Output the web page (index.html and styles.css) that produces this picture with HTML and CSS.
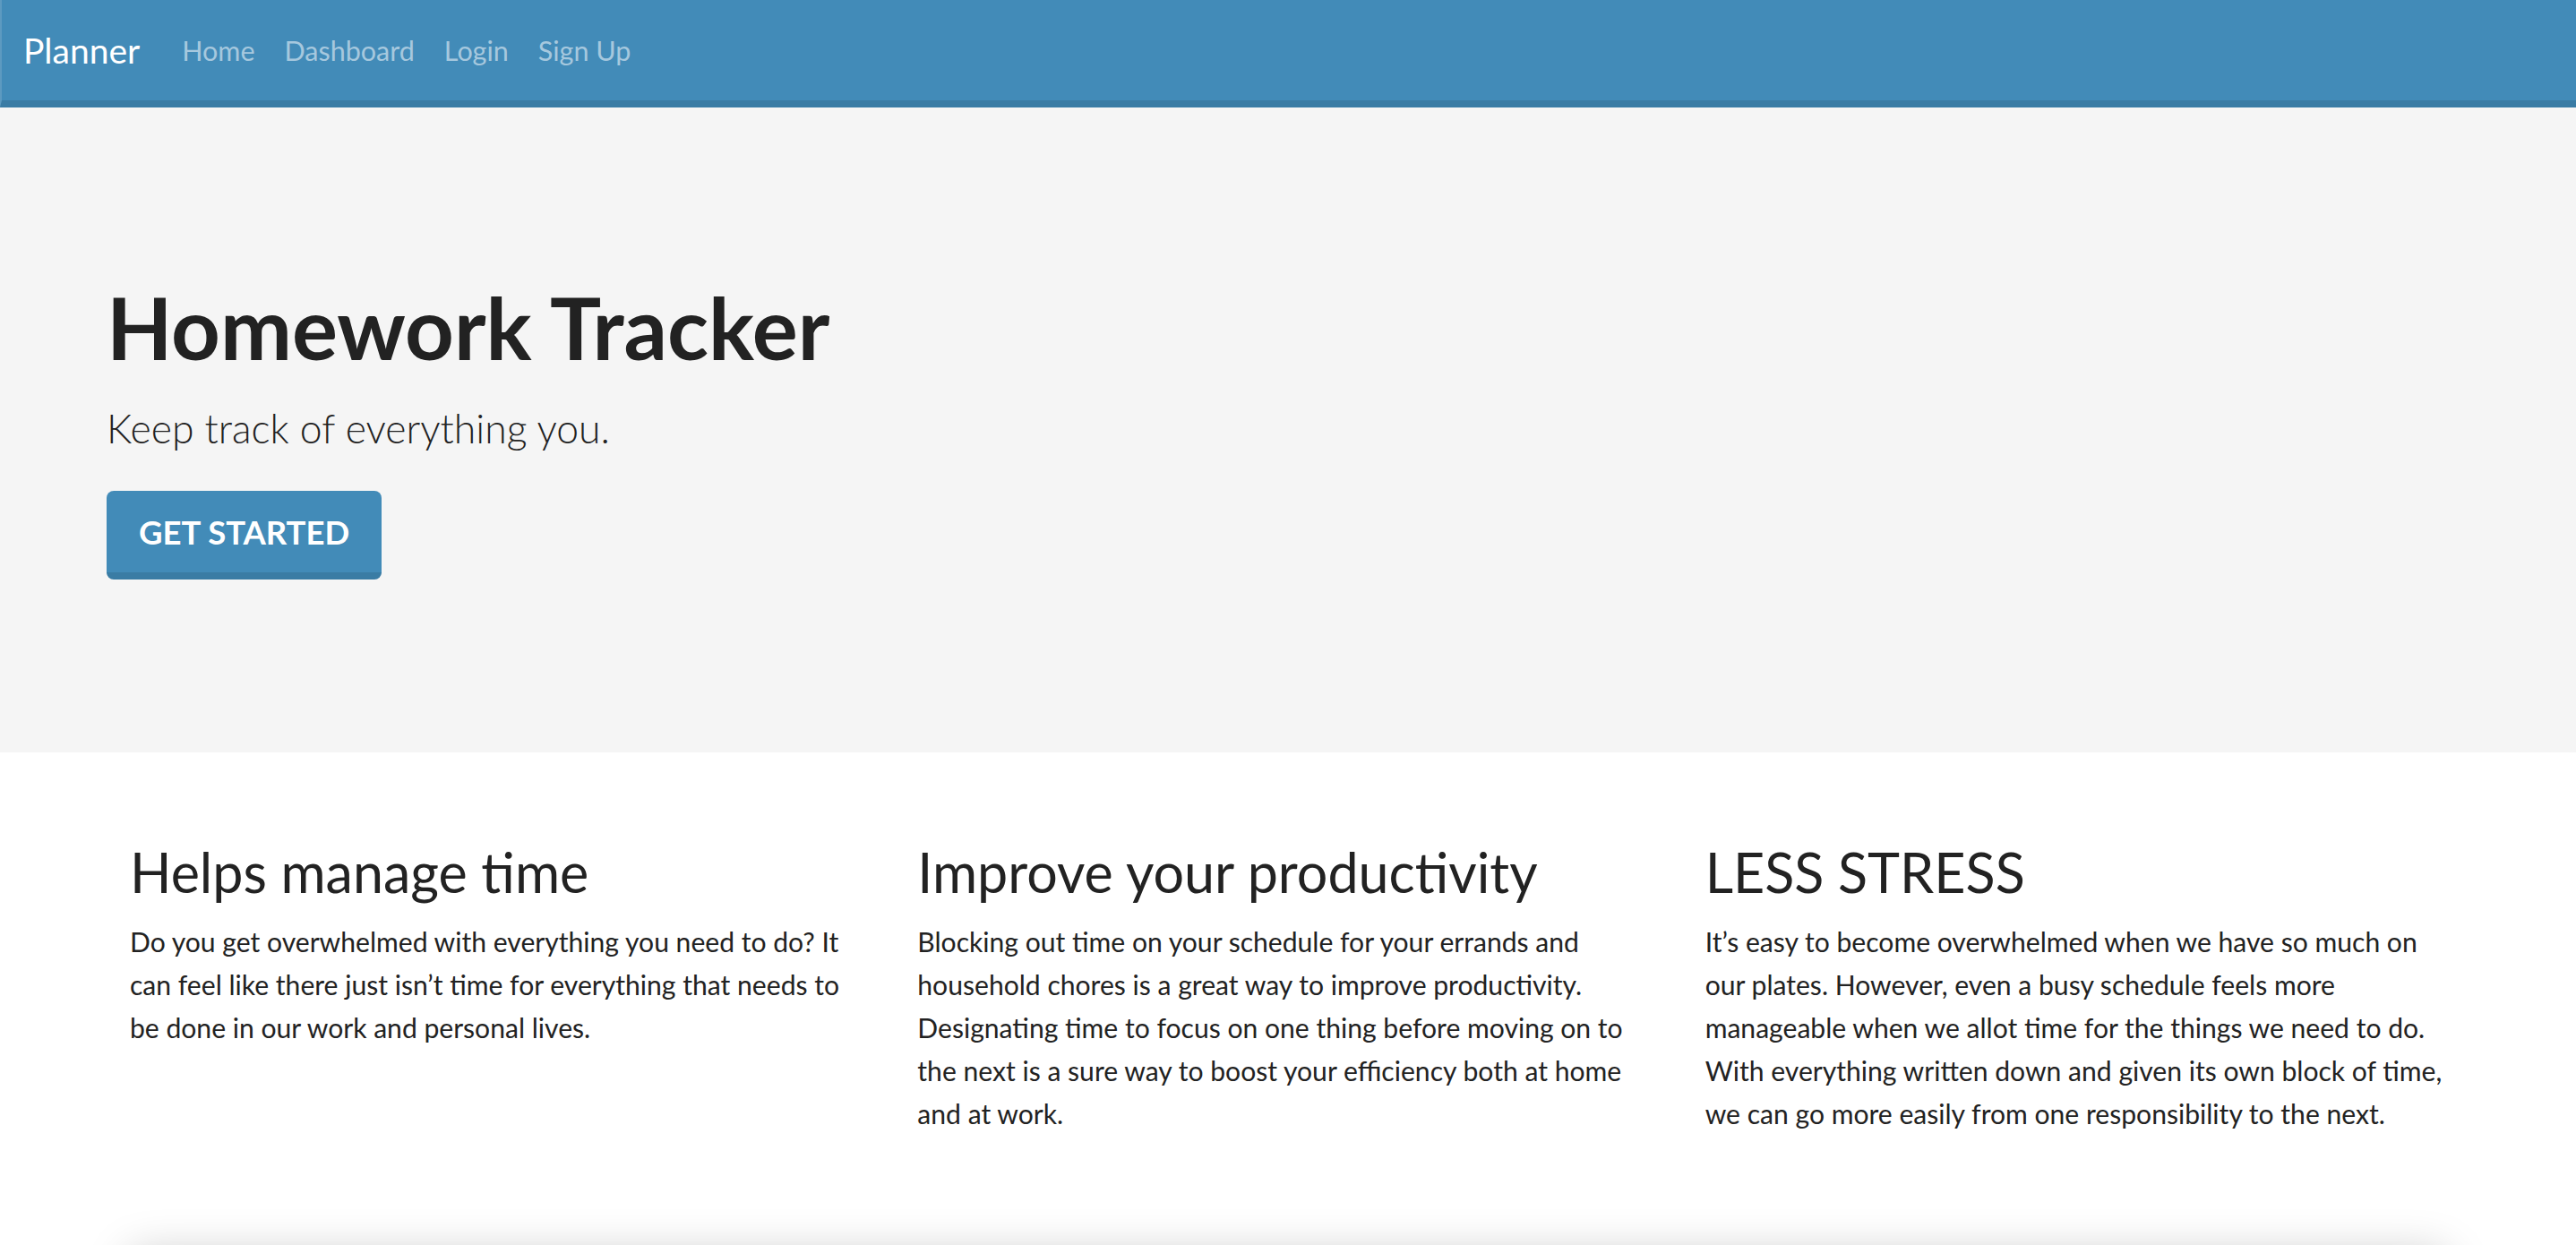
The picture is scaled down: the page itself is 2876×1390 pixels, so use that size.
FILE: index.html
```html
<!DOCTYPE html>
<html lang="en">
<head>
<meta charset="utf-8">
<title>Planner</title>
<link rel="stylesheet" href="styles.css">
</head>
<body>
<nav class="navbar">
  <a class="brand" href="#">Planner</a>
  <ul class="nav-links">
    <li><a href="#">Home</a></li>
    <li><a href="#">Dashboard</a></li>
    <li><a href="#">Login</a></li>
    <li><a href="#">Sign Up</a></li>
  </ul>
</nav>
<header class="jumbotron">
  <div class="container">
    <h1 class="hero-title">Homework Tracker</h1>
    <p class="hero-lead">Keep track of everything you.</p>
    <a class="btn-primary" href="#">Get Started</a>
  </div>
</header>
<main class="features">
  <div class="container">
    <div class="feature-row">
      <section class="feature">
        <h2>Helps manage time</h2>
        <p>Do you get overwhelmed with everything you need to do? It can feel like there just isn’t time for everything that needs to be done in our work and personal lives.</p>
      </section>
      <section class="feature">
        <h2>Improve your productivity</h2>
        <p>Blocking out time on your schedule for your errands and household chores is a great way to improve productivity. Designating time to focus on one thing before moving on to the next is a sure way to boost your efficiency both at home and at work.</p>
      </section>
      <section class="feature">
        <h2>LESS STRESS</h2>
        <p>It’s easy to become overwhelmed when we have so much on our plates. However, even a busy schedule feels more manageable when we allot time for the things we need to do. With everything written down and given its own block of time, we can go more easily from one responsibility to the next.</p>
      </section>
    </div>
    <div class="card"></div>
  </div>
</main>
</body>
</html>
```
FILE: styles.css
```css
* { box-sizing: border-box; }
html, body { margin: 0; padding: 0; }
body {
  font-family: Lato, "Noto Sans", sans-serif;
  color: #222;
  background: #fff;
}
a { text-decoration: none; }

.navbar {
  display: flex;
  align-items: center;
  height: 120px;
  background: #428bb8;
  border-bottom: 8px solid #3a7ca5;
  border-left: 2px solid #5d9ac0;
  padding-left: 24px;
}
.brand {
  color: #fff;
  font-size: 39px;
  line-height: 1;
  margin-right: 47px;
}
.nav-links {
  display: flex;
  gap: 33px;
  list-style: none;
  margin: 0;
  padding: 0;
}
.nav-links a {
  color: #a6c8de;
  font-size: 30.5px;
  line-height: 1;
}

.container {
  width: 2638px;
  margin: 0 auto;
}

.jumbotron {
  background: #f5f5f5;
  padding: 193px 0 193px;
}
.hero-title {
  margin: 0;
  font-size: 95.5px;
  line-height: 104px;
  font-weight: 700;
  color: #222;
}
.hero-lead {
  margin: 30px 0 40px;
  font-size: 44.5px;
  line-height: 61px;
  font-weight: 300;
}
.btn-primary {
  display: inline-flex;
  align-items: center;
  height: 99px;
  padding: 0 36px;
  background: #428bb8;
  border-bottom: 8px solid #3a7ca4;
  border-radius: 8px;
  color: #fff;
  font-size: 36.5px;
  font-weight: 700;
  text-transform: uppercase;
}

.features {
  padding-top: 100px;
}
.feature-row {
  display: grid;
  grid-template-columns: repeat(3, 1fr);
}
.feature {
  padding: 0 26px;
}
.feature h2 {
  margin: 0 0 20px;
  font-size: 61px;
  line-height: 67px;
  font-weight: 400;
}
.feature p {
  margin: 0;
  font-size: 30.1px;
  line-height: 48px;
}
.card {
  margin: 133px 26px 0;
  height: 300px;
  background: #fff;
  border-radius: 6px;
  box-shadow: 0 0 50px rgba(0, 0, 0, 0.22);
}
```
